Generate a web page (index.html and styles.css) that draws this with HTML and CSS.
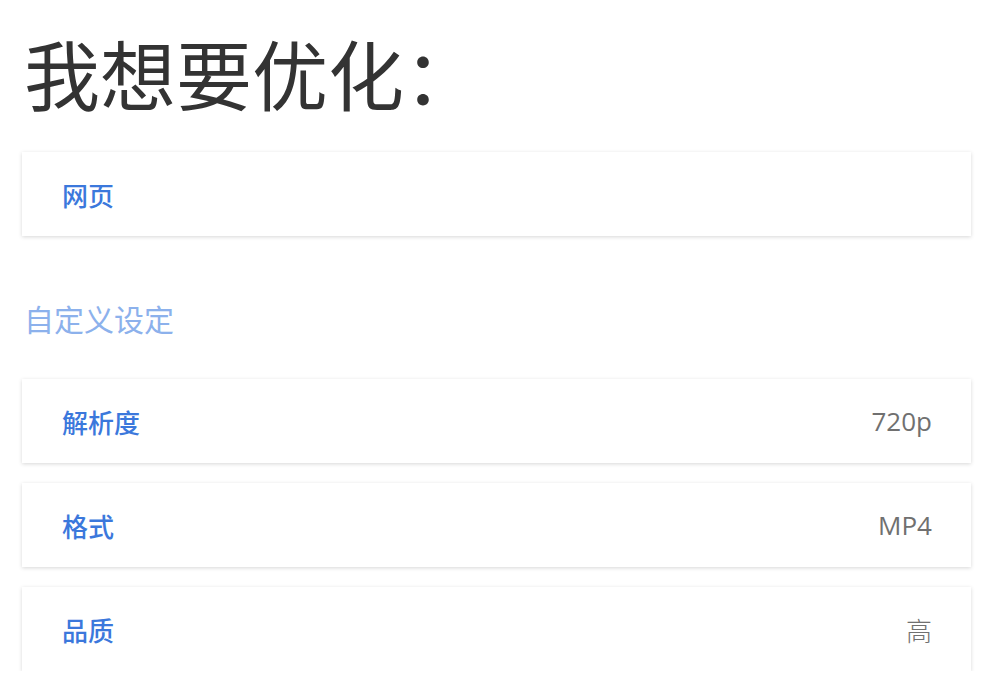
FILE: index.html
```html
<!DOCTYPE html>
<html lang="zh">
<head>
<meta charset="utf-8">
<link rel="stylesheet" href="styles.css">
</head>
<body>
<main class="page">
  <h1 class="title">我想要优化：</h1>
  <div class="card"><span class="label">网页</span></div>
  <h2 class="section">自定义设定</h2>
  <div class="list">
    <div class="card"><span class="label">解析度</span><span class="value">720p</span></div>
    <div class="card"><span class="label">格式</span><span class="value">MP4</span></div>
    <div class="card"><span class="label">品质</span><span class="value cjk">高</span></div>
  </div>
</main>
</body>
</html>
```
FILE: styles.css
```css
* { box-sizing: border-box; }
html, body { margin: 0; padding: 0; background: #fff; }
body { font-family: "Noto Sans CJK SC", "Noto Sans", sans-serif; }
.page { padding: 0 19px 0 22px; }
.title {
  margin: 0;
  padding-top: 25px;
  padding-left: 2px;
  font-size: 76px;
  line-height: 95px;
  font-weight: 400;
  color: #333;
}
.card {
  display: flex;
  align-items: center;
  justify-content: space-between;
  height: 84px;
  padding: 0 39px 0 40px;
  background: #fff;
  box-shadow: 0 1px 4px rgba(0,0,0,0.16);
}
.title + .card { margin-top: 32px; }
.label {
  font-size: 26px;
  color: #3b78dc;
  font-weight: 500;
}
.value {
  font-family: "Open Sans", "Noto Sans", sans-serif;
  font-size: 26px;
  color: #707070;
}
.value.cjk { font-family: "Noto Sans CJK SC", sans-serif; font-weight: 300; }
.section {
  margin: 62px 0 0 2px;
  font-size: 30px;
  line-height: 40px;
  font-weight: 400;
  color: #8cb1ec;
}
.list {
  display: flex;
  flex-direction: column;
  gap: 20px;
  margin-top: 41px;
}
```
